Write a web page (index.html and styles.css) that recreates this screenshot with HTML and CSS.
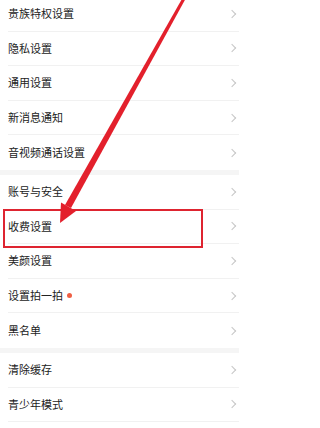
FILE: index.html
```html
<!DOCTYPE html>
<html lang="zh">
<head>
<meta charset="utf-8">
<link rel="stylesheet" href="styles.css">
</head>
<body>
<div class="page">
  <div class="list">
    <div class="section">
      <div class="row"><span class="label">贵族特权设置</span><span class="chev"></span></div>
      <div class="row"><span class="label">隐私设置</span><span class="chev"></span></div>
      <div class="row"><span class="label">通用设置</span><span class="chev"></span></div>
      <div class="row"><span class="label">新消息通知</span><span class="chev"></span></div>
      <div class="row"><span class="label">音视频通话设置</span><span class="chev"></span></div>
    </div>
    <div class="section">
      <div class="row"><span class="label">账号与安全</span><span class="chev"></span></div>
      <div class="row"><span class="label">收费设置</span><span class="chev"></span></div>
      <div class="row"><span class="label">美颜设置</span><span class="chev"></span></div>
      <div class="row"><span class="label">设置拍一拍</span><span class="dot"></span><span class="chev"></span></div>
      <div class="row"><span class="label">黑名单</span><span class="chev"></span></div>
    </div>
    <div class="section">
      <div class="row"><span class="label">清除缓存</span><span class="chev"></span></div>
      <div class="row"><span class="label">青少年模式</span><span class="chev"></span></div>
      <div class="row row-empty"></div>
    </div>
  </div>
  <div class="highlight"></div>
  <svg class="arrow" width="239" height="428" viewBox="0 0 239 428">
    <polygon points="182.5,-2 186,-2 71,208 65,205" fill="#e3202c"/>
    <polygon points="60,223 61,202.5 76,211" fill="#e3202c"/>
  </svg>
</div>
</body>
</html>
```
FILE: styles.css
```css
html, body {
  margin: 0;
  padding: 0;
  background: #ffffff;
}
.page {
  position: relative;
  width: 239px;
  height: 428px;
  overflow: hidden;
  font-family: "Noto Sans CJK SC", "Noto Sans", sans-serif;
}
.list {
  margin-top: -3px;
  display: flex;
  flex-direction: column;
  gap: 5px;
  background: #f5f5f5;
}
.section {
  background: #ffffff;
  display: flex;
  flex-direction: column;
}
.row {
  box-sizing: border-box;
  height: 34.6px;
  margin-left: 8px;
  padding-right: 3px;
  display: flex;
  align-items: center;
  border-bottom: 1px solid #f1f1f1;
}
.section .row:last-child {
  border-bottom: none;
}
.label {
  font-size: 11px;
  color: #222222;
  line-height: 1;
}
.dot {
  width: 5px;
  height: 5px;
  border-radius: 50%;
  background: #ef5f44;
  margin-left: 4px;
}
.chev {
  margin-left: auto;
  width: 5px;
  height: 5px;
  border-top: 1px solid #c6c6c6;
  border-right: 1px solid #c6c6c6;
  transform: rotate(45deg);
  margin-right: 1px;
}
.highlight {
  position: absolute;
  left: 3px;
  top: 209px;
  width: 196px;
  height: 35px;
  border: 2px solid #de2430;
}
.arrow {
  position: absolute;
  left: 0;
  top: 0;
}
```
